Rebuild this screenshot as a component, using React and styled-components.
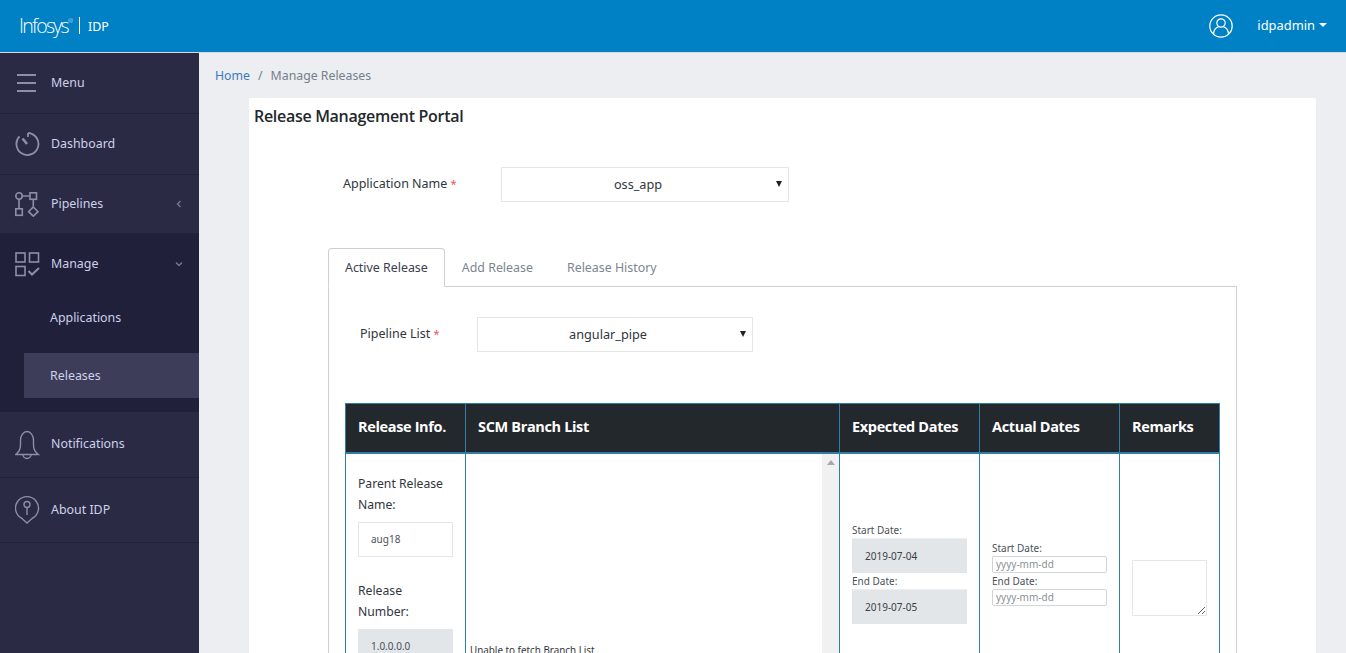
import React from "react";
import styled, { createGlobalStyle } from "styled-components";

const GlobalStyle = createGlobalStyle`
    html, body {
        margin: 0;
        height: 100%;
        overflow: hidden;
    }
    body {
        font-family: "Noto Sans", "Open Sans", sans-serif;
        font-size: 12.5px;
        color: #2b3038;
        background: #eceef1;
    }
    * {
        box-sizing: border-box;
    }
`;

const MenuIcon = () => (
    <svg width="22" height="18" viewBox="0 0 22 18" fill="none" stroke="#8e8ea8" strokeWidth="2">
        <path d="M2 1h19M2 9h19M2 17h19" />
    </svg>
);

const DashIcon = () => (
    <svg width="26" height="26" viewBox="0 0 26 26" fill="none" stroke="#8e8ea8" strokeWidth="1.8">
        <path d="M13 2A11 11 0 1 1 4.500 5.400" />
        <path d="M13 2v4" />
        <path d="M7.500 7.500l4.500 5.500" strokeWidth="2.600" />
    </svg>
);

const PipeIcon = () => (
    <svg width="26" height="25" viewBox="0 0 26 25" fill="none" stroke="#8e8ea8" strokeWidth="1.6">
        <circle cx="4" cy="4" r="3.200" />
        <rect x="15" y="0.800" width="6.500" height="6.500" />
        <rect x="0.800" y="16.800" width="6.500" height="6.500" />
        <path d="M7.500 4h7M4 7.500v8.500M18.300 7.500v7" />
        <path d="M18.300 15l4.700 4.700-4.700 4.500-4.700-4.500z" />
    </svg>
);

const ManageIcon = () => (
    <svg width="26" height="26" viewBox="0 0 26 26" fill="none" stroke="#8e8ea8" strokeWidth="1.6">
        <rect x="1" y="2" width="9" height="9" />
        <rect x="14.500" y="2" width="9" height="9" />
        <rect x="1" y="15.500" width="9" height="9" />
        <path d="M13.500 20l3.500 3.500 7-6.500" strokeWidth="2" />
    </svg>
);

const BellIcon = () => (
    <svg width="26" height="30" viewBox="0 0 26 30" fill="none" stroke="#8e8ea8" strokeWidth="1.400">
        <path d="M0.700 24.500C4 22 5.500 19 5.500 15V10C5.500 5.500 8.500 1.500 12 1.500S18.500 5.500 18.500 10V15C18.500 19 20 22 23.300 24.500Z" />
        <path d="M8 24.500a4 4 0 0 0 8 0" />
    </svg>
);

const PinIcon = () => (
    <svg width="26" height="30" viewBox="0 0 26 30" fill="none" stroke="#8e8ea8" strokeWidth="1.400">
        <path d="M7 23.500a11.500 11.500 0 1 1 10 0l-5 4.500z" />
        <circle cx="12" cy="9.500" r="3" />
        <path d="M12 12.500v7.500" />
    </svg>
);

const UserIcon = () => (
    <svg width="24" height="24" viewBox="0 0 24 24" fill="none" stroke="#fff" strokeWidth="1.200">
        <circle cx="12" cy="12" r="11.200" />
        <circle cx="12" cy="9" r="4.200" />
        <path d="M4.500 20c0-4.500 3-6.800 5-7M19.500 20c0-4.500-3-6.800-5-7" />
    </svg>
);

const Chevron = ({ open }) => (
    <svg width="8" height="8" viewBox="0 0 8 8" fill="none" stroke="#77778f" strokeWidth="1.400">
        <path d={open ? "M1 2.500l3 3 3-3" : "M5.500 1l-3 3 3 3"} />
    </svg>
);

const navItems = [
    { label: "Menu", icon: <MenuIcon />, height: 61 },
    { label: "Dashboard", icon: <DashIcon />, height: 61 },
    { label: "Pipelines", icon: <PipeIcon />, height: 59, chevron: true },
];

const App = () => {
    return (
        <>
            <GlobalStyle />
            <Header>
                <Logo>
                    <LogoWord>Infosys<sup>®</sup></LogoWord>
                    <LogoBar />
                    <LogoApp>IDP</LogoApp>
                </Logo>
                <UserArea>
                    <UserIcon />
                    <UserName>idpadmin</UserName>
                    <Caret />
                </UserArea>
            </Header>
            <Body>
                <Sidebar>
                    {navItems.map((item) => (
                        <NavRow key={item.label} $height={item.height}>
                            <NavIcon>{item.icon}</NavIcon>
                            <NavLabel>{item.label}</NavLabel>
                            {item.chevron && <NavChevron><Chevron /></NavChevron>}
                        </NavRow>
                    ))}
                    <ManageGroup>
                        <NavRow $height={60} $plain>
                            <NavIcon><ManageIcon /></NavIcon>
                            <NavLabel>Manage</NavLabel>
                            <NavChevron><Chevron open /></NavChevron>
                        </NavRow>
                        <SubItem>Applications</SubItem>
                        <SubItem $active>Releases</SubItem>
                    </ManageGroup>
                    <NavRow $height={66}>
                        <NavIcon><BellIcon /></NavIcon>
                        <NavLabel>Notifications</NavLabel>
                    </NavRow>
                    <NavRow $height={65}>
                        <NavIcon><PinIcon /></NavIcon>
                        <NavLabel>About IDP</NavLabel>
                    </NavRow>
                </Sidebar>
                <Main>
                    <Breadcrumb>
                        <CrumbLink>Home</CrumbLink>
                        <CrumbSep>/</CrumbSep>
                        <span>Manage Releases</span>
                    </Breadcrumb>
                    <Card>
                        <Title>Release Management Portal</Title>
                        <AppRow>
                            <FieldLabel $width={158}>Application Name <Req>*</Req></FieldLabel>
                            <SelectBox $width={288}>oss_app<SelectArrow /></SelectBox>
                        </AppRow>
                        <Tabs>
                            <Tab $active>Active Release</Tab>
                            <Tab>Add Release</Tab>
                            <Tab>Release History</Tab>
                        </Tabs>
                        <Panel>
                            <PipelineRow>
                                <FieldLabel $width={117}>Pipeline List <Req>*</Req></FieldLabel>
                                <SelectBox $width={276}>angular_pipe<SelectArrow /></SelectBox>
                            </PipelineRow>
                            <ReleaseTable>
                                <colgroup>
                                    <col width="120" />
                                    <col width="374" />
                                    <col width="140" />
                                    <col width="140" />
                                    <col width="100" />
                                </colgroup>
                                <thead>
                                    <tr>
                                        <HeadCell>Release Info.</HeadCell>
                                        <HeadCell>SCM Branch List</HeadCell>
                                        <HeadCell>Expected Dates</HeadCell>
                                        <HeadCell>Actual Dates</HeadCell>
                                        <HeadCell>Remarks</HeadCell>
                                    </tr>
                                </thead>
                                <tbody>
                                    <tr>
                                        <InfoCell>
                                            <InfoLabel>Parent Release Name:</InfoLabel>
                                            <InfoValue>aug18</InfoValue>
                                            <InfoLabel $gap>Release Number:</InfoLabel>
                                            <InfoValue $disabled>1.0.0.0.0</InfoValue>
                                        </InfoCell>
                                        <BranchCell>
                                            <BranchScroll>
                                                <BranchText>Unable to fetch Branch List</BranchText>
                                                <ScrollTrack><ScrollUp /></ScrollTrack>
                                            </BranchScroll>
                                        </BranchCell>
                                        <DateCell>
                                            <DateLabel>Start Date:</DateLabel>
                                            <DateValue>2019-07-04</DateValue>
                                            <DateLabel>End Date:</DateLabel>
                                            <DateValue>2019-07-05</DateValue>
                                        </DateCell>
                                        <DateCell>
                                            <DateLabel>Start Date:</DateLabel>
                                            <DateInput placeholder="yyyy-mm-dd" />
                                            <DateLabel>End Date:</DateLabel>
                                            <DateInput placeholder="yyyy-mm-dd" />
                                        </DateCell>
                                        <DateCell>
                                            <Remarks />
                                        </DateCell>
                                    </tr>
                                </tbody>
                            </ReleaseTable>
                        </Panel>
                    </Card>
                </Main>
            </Body>
        </>
    );
};

export default App;

const Header = styled.header`
    height: 53px;
    background: #0080c5;
    border-bottom: 1px solid #d6d9de;
    display: flex;
    align-items: center;
    justify-content: space-between;
    padding: 0 19px 0 19px;
    color: #fff;
`;

const Logo = styled.div`
    display: flex;
    align-items: center;
    margin-bottom: 2px;
`;

const LogoWord = styled.span`
    font-family: "Open Sans", sans-serif;
    font-weight: 300;
    font-size: 19.5px;
    letter-spacing: -1.7px;
    sup {
        font-size: 6px;
        vertical-align: 10px;
        line-height: 0;
        letter-spacing: 0;
    }
`;

const LogoBar = styled.span`
    width: 1px;
    height: 17px;
    background: #fff;
    margin: 0 8px 0 6px;
`;

const LogoApp = styled.span`
    font-size: 12.5px;
    padding-top: 3px;
`;

const UserArea = styled.div`
    display: flex;
    align-items: center;
`;

const UserName = styled.span`
    font-size: 12.9px;
    margin: 0 0 2px 24px;
`;

const Caret = styled.span`
    width: 0;
    height: 0;
    margin: 0 0 3px 4px;
    border-left: 4px solid transparent;
    border-right: 4px solid transparent;
    border-top: 4px solid #fff;
`;

const Body = styled.div`
    display: flex;
    height: 600px;
    overflow: hidden;
`;

const Sidebar = styled.nav`
    width: 199px;
    flex: none;
    background: #2a2a44;
    display: flex;
    flex-direction: column;
`;

const NavRow = styled.div`
    height: ${({ $height }) => $height}px;
    flex: none;
    display: flex;
    align-items: center;
    padding: 0 15px;
    border-bottom: ${({ $plain }) => ($plain ? "none" : "1px solid #22223a")};
    color: #cdd1ea;
`;

const NavIcon = styled.span`
    width: 36px;
    display: flex;
    align-items: center;
`;

const NavLabel = styled.span`
    font-size: 12.4px;
    flex: 1;
    padding-bottom: 2px;
`;

const NavChevron = styled.span`
    display: flex;
    margin-right: 1px;
`;

const ManageGroup = styled.div`
    height: 178px;
    flex: none;
    background: #20203a;
`;

const SubItem = styled.div`
    height: 45px;
    margin: 0 0 14px 24px;
    padding: ${({ $active }) => ($active ? "0" : "2px")} 0 0 26px;
    display: flex;
    align-items: center;
    font-size: 12.4px;
    color: #cdd1ea;
    background: ${({ $active }) => ($active ? "#3d3d59" : "transparent")};
`;

const Main = styled.main`
    flex: 1;
    min-width: 0;
    padding: 0 30px 0 50px;
`;

const Breadcrumb = styled.div`
    height: 45px;
    margin-left: -34px;
    display: flex;
    align-items: center;
    font-size: 12.3px;
    color: #75808c;
`;

const CrumbLink = styled.span`
    color: #3d7ab8;
`;

const CrumbSep = styled.span`
    margin: 0 8px;
`;

const Card = styled.section`
    background: #fff;
    border-radius: 2px;
    padding: 0 79px 0 5px;
    min-height: 700px;
`;

const Title = styled.h1`
    margin: 0;
    padding-top: 7px;
    height: 69px;
    font-family: "Open Sans", sans-serif;
    font-size: 16px;
    font-weight: 600;
    letter-spacing: -0.3px;
    line-height: 22px;
    color: #23282d;
`;

const AppRow = styled.div`
    display: flex;
    align-items: center;
    padding-left: 89px;
`;

const FieldLabel = styled.label`
    width: ${({ $width }) => $width}px;
    padding-bottom: 2px;
    font-size: 12.5px;
    color: #30363d;
`;

const Req = styled.span`
    font-size: 11px;
    color: #f0524f;
`;

const SelectBox = styled.div`
    position: relative;
    width: ${({ $width }) => $width}px;
    height: 35px;
    padding: 0 14px 2px 0;
    border: 1px solid #e4e6e9;
    display: flex;
    align-items: center;
    justify-content: center;
    font-size: 12.7px;
    color: #30363d;
`;

const SelectArrow = styled.span`
    position: absolute;
    right: 6px;
    top: 13px;
    border-left: 3px solid transparent;
    border-right: 3px solid transparent;
    border-top: 6px solid #222;
`;

const Tabs = styled.div`
    display: flex;
    margin: 46px 0 0 74px;
    height: 38px;
    font-size: 12.4px;
    position: relative;
    z-index: 1;
`;

const Tab = styled.div`
    padding: 0 16px;
    display: flex;
    align-items: center;
    color: ${({ $active }) => ($active ? "#39404a" : "#7b8591")};
    background: #fff;
    border: 1px solid ${({ $active }) => ($active ? "#ccd0d4" : "transparent")};
    border-bottom: ${({ $active }) => ($active ? "1px solid #fff" : "none")};
    border-radius: 4px 4px 0 0;
    height: ${({ $active }) => ($active ? "39px" : "38px")};
`;

const Panel = styled.div`
    margin-left: 74px;
    border: 1px solid #ccd0d4;
    border-bottom: none;
    padding: 30px 16px 0 16px;
`;

const PipelineRow = styled.div`
    display: flex;
    align-items: center;
    padding-left: 15px;
    margin-bottom: 51px;
`;

const ReleaseTable = styled.table`
    border-collapse: collapse;
    table-layout: fixed;
    width: 875px;
`;

const HeadCell = styled.th`
    height: 49px;
    padding: 0 12px 3px;
    background: #23282d;
    border: 1px solid #2f7ea8;
    border-bottom: 2px solid #2f7ea8;
    color: #fff;
    font-family: "Open Sans", sans-serif;
    font-size: 14.500px;
    font-weight: 700;
    letter-spacing: -0.35px;
    text-align: left;
`;

const InfoCell = styled.td`
    height: 239px;
    padding: 19px 12px 0;
    vertical-align: top;
    border: 1px solid #2f7ea8;
`;

const InfoLabel = styled.div`
    font-size: 12.2px;
    line-height: 21.500px;
    margin-top: ${({ $gap }) => ($gap ? "23px" : "0")};
    color: #30363d;
`;

const InfoValue = styled.div`
    height: 35px;
    margin-top: 6px;
    padding-left: 12px;
    display: flex;
    align-items: center;
    font-size: 10px;
    color: #4a5058;
    background: ${({ $disabled }) => ($disabled ? "#e2e6e9" : "#fff")};
    border: 1px solid ${({ $disabled }) => ($disabled ? "#e2e6e9" : "#e4e6e9")};
`;

const BranchCell = styled.td`
    padding: 0;
    vertical-align: top;
    border: 1px solid #2f7ea8;
`;

const BranchScroll = styled.div`
    display: flex;
    height: 238px;
`;

const BranchText = styled.div`
    flex: 1;
    padding: 189px 0 0 4px;
    font-size: 9.850px;
    color: #30363d;
`;

const ScrollTrack = styled.div`
    width: 17px;
    flex: none;
    background: #f1f1f1;
    display: flex;
    justify-content: center;
    padding-top: 6px;
`;

const ScrollUp = styled.span`
    width: 0;
    height: 0;
    border-left: 4px solid transparent;
    border-right: 4px solid transparent;
    border-bottom: 5px solid #a8a8a8;
`;

const DateCell = styled.td`
    padding: 0 12px;
    vertical-align: middle;
    border: 1px solid #2f7ea8;
`;

const DateLabel = styled.div`
    font-size: 10px;
    line-height: 16px;
    color: #4a5058;
`;

const DateValue = styled.div`
    height: 35px;
    padding-left: 13px;
    display: flex;
    align-items: center;
    font-size: 10px;
    color: #3a4048;
    background: #e2e6e9;
    border-top: 1px solid #eceef0;
`;

const DateInput = styled.input`
    display: block;
    width: 115px;
    height: 17px;
    padding: 0 3px;
    border: 1px solid #d2d4d6;
    border-radius: 2px;
    font-family: inherit;
    font-size: 10px;
    &::placeholder {
        color: #8a8f96;
    }
`;

const Remarks = styled.textarea`
    display: block;
    width: 75px;
    height: 56px;
    margin-top: 31px;
    border: 1px solid #e4e6e9;
    background: #fff;
`;
